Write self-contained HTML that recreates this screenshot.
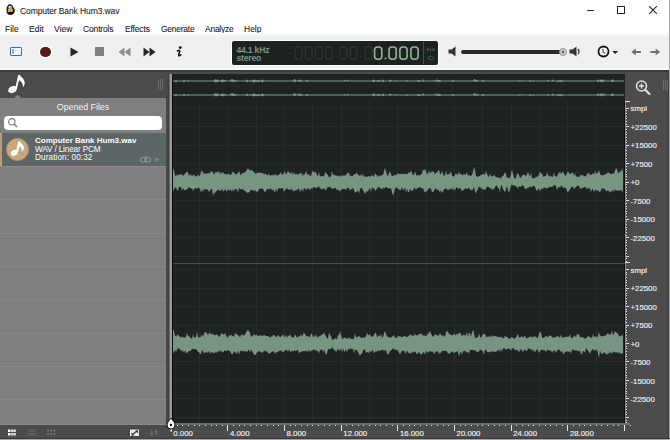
<!DOCTYPE html>
<html><head><meta charset="utf-8">
<style>
*{margin:0;padding:0;box-sizing:border-box}
html,body{width:670px;height:440px;overflow:hidden;background:#fff}
body{position:relative;font-family:"Liberation Sans",sans-serif;color:#000}
.a{position:absolute}
.t{white-space:nowrap;line-height:1}
</style></head><body>
<!-- title bar -->
<div class="a" style="left:0;top:0;width:670px;height:35px;background:#fff"></div>
<svg class="a" style="left:0;top:0" width="20" height="20">
  <path d="M9.5 4.2C11.5 4 13 5.5 13.2 7.2C14.5 8.5 15.2 10.5 14.6 12.2C13.8 14.2 11.5 15 9.5 14.8C7.5 14.6 6.4 13 6.6 11C6.2 9.5 6.5 7.5 7.3 6.2C7.8 5 8.5 4.3 9.5 4.2Z" fill="#1e1a14"/>
  <path d="M8.2 6.5C9 5.6 11 5.5 12 6.5L11.5 8H8.5Z" fill="#c8ccd2"/>
  <ellipse cx="10.3" cy="10.3" rx="2.6" ry="2.5" fill="#c9a55e"/>
  <ellipse cx="10.6" cy="13.3" rx="2.4" ry="1.2" fill="#0c0c0c"/>
</svg>
<div class="a t" style="left:20px;top:7px;font-size:8.5px;color:#1a1a1a;-webkit-text-stroke:0.08px #1a1a1a;letter-spacing:-0.1px">Computer Bank Hum3.wav</div>
<!-- window controls -->
<div class="a" style="left:587px;top:10px;width:7px;height:1px;background:#222"></div>
<div class="a" style="left:617px;top:6px;width:8px;height:8px;border:1px solid #222"></div>
<svg class="a" style="left:649px;top:6px" width="8" height="8" viewBox="0 0 8 8"><path d="M0 0L8 8M8 0L0 8" stroke="#222" stroke-width="1.1"/></svg>
<!-- menu -->
<div class="a t" style="left:5px;top:25px;font-size:8.5px;color:#1a1a1a;-webkit-text-stroke:0.08px #1a1a1a">File</div>
<div class="a t" style="left:29px;top:25px;font-size:8.5px;color:#1a1a1a;-webkit-text-stroke:0.08px #1a1a1a">Edit</div>
<div class="a t" style="left:54px;top:25px;font-size:8.5px;color:#1a1a1a;-webkit-text-stroke:0.08px #1a1a1a">View</div>
<div class="a t" style="left:83px;top:25px;font-size:8.5px;color:#1a1a1a;-webkit-text-stroke:0.08px #1a1a1a;letter-spacing:-0.15px">Controls</div>
<div class="a t" style="left:125px;top:25px;font-size:8.5px;color:#1a1a1a;-webkit-text-stroke:0.08px #1a1a1a;letter-spacing:-0.15px">Effects</div>
<div class="a t" style="left:161px;top:25px;font-size:8.5px;color:#1a1a1a;-webkit-text-stroke:0.08px #1a1a1a;letter-spacing:-0.25px">Generate</div>
<div class="a t" style="left:205px;top:25px;font-size:8.5px;color:#1a1a1a;-webkit-text-stroke:0.08px #1a1a1a;letter-spacing:-0.25px">Analyze</div>
<div class="a t" style="left:244px;top:25px;font-size:8.5px;color:#1a1a1a;-webkit-text-stroke:0.08px #1a1a1a">Help</div>
<!-- toolbar -->
<div class="a" style="left:0;top:33px;width:670px;height:36px;background:linear-gradient(180deg,#fff 0px,#f0f0f0 4px,#f0f0f0 100%)"></div>
<div class="a" style="left:0;top:68px;width:670px;height:2px;background:#fafafa"></div>
<!-- sidebar toggle -->
<div class="a" style="left:10px;top:47px;width:12px;height:9px;border:1.5px solid #3d6aa5;border-radius:1px;background:#f4f6fa"></div>
<div class="a" style="left:12px;top:49px;width:2px;height:5px;background:#9db3d3"></div>
<!-- record -->
<div class="a" style="left:40px;top:46.5px;width:10.5px;height:10.5px;border-radius:50%;background:radial-gradient(circle,#5c1d1d 0%,#541818 60%,#3a0c0c 100%);box-shadow:0 0 0 1.3px #fff"></div>
<!-- play -->
<svg class="a" style="left:70px;top:47px" width="9" height="10"><path d="M0.5 0.5L8.5 5L0.5 9.5Z" fill="#262626"/></svg>
<!-- stop -->
<div class="a" style="left:95px;top:47px;width:9px;height:9px;background:#808080"></div>
<!-- rewind -->
<svg class="a" style="left:118px;top:47px" width="13" height="10"><path d="M6.5 0.5L0.5 5L6.5 9.5ZM12.5 0.5L6.5 5L12.5 9.5Z" fill="#8c8c8c"/></svg>
<!-- ff -->
<svg class="a" style="left:143px;top:47px" width="13" height="10"><path d="M0.5 0.5L6.5 5L0.5 9.5ZM6.5 0.5L12.5 5L6.5 9.5Z" fill="#262626"/></svg>
<!-- info -->
<svg class="a" style="left:0;top:0" width="200" height="70"><g stroke="#fff" stroke-width="3" stroke-linecap="round" fill="none" opacity="0.9"><path d="M177.5 50.8Q179.4 49.9 179.7 51.2L178.7 54.9Q178.5 56.2 179.8 55.6L180.9 54.9"/></g><circle cx="180.3" cy="47.6" r="1.45" fill="#111"/><path d="M177.5 50.8Q179.4 49.9 179.7 51.2L178.7 54.9Q178.5 56.2 179.8 55.6L180.9 54.9" stroke="#111" stroke-width="1.7" stroke-linecap="round" stroke-linejoin="round" fill="none"/></svg>
<!-- time display -->
<div class="a" style="left:231px;top:40px;width:208px;height:26px;border-radius:3px;background:#fff"></div>
<div class="a" style="left:232px;top:41px;width:206px;height:24px;border-radius:2px;background:#1d211f"></div>
<div class="a t" style="left:236.5px;top:46px;font-size:8.6px;font-weight:bold;color:#7a9684;letter-spacing:-0.2px">44.1 kHz</div>
<div class="a t" style="left:236.5px;top:54px;font-size:8.6px;font-weight:bold;color:#7a9684;letter-spacing:-0.2px">stereo</div>
<svg class="a" style="left:0;top:0" width="670" height="70">
<g fill="none" stroke="#2b312d" stroke-width="1.6"><rect x="295.3" y="46.8" width="6.8" height="12.4" rx="2.8"/><rect x="305.4" y="46.8" width="6.8" height="12.4" rx="2.8"/><rect x="315.4" y="46.8" width="6.8" height="12.4" rx="2.8"/><rect x="325.5" y="46.8" width="6.8" height="12.4" rx="2.8"/><rect x="340.0" y="46.8" width="6.8" height="12.4" rx="2.8"/><rect x="350.2" y="46.8" width="6.8" height="12.4" rx="2.8"/><rect x="365.3" y="46.8" width="6.8" height="12.4" rx="2.8"/></g><path d="M287.5 53.3H291" stroke="#2b312d" stroke-width="1.4"/><g fill="#2b312d"><rect x="335.5" y="50" width="1.5" height="1.5"/><rect x="335.5" y="56" width="1.5" height="1.5"/><rect x="360" y="50" width="1.5" height="1.5"/><rect x="360" y="56" width="1.5" height="1.5"/></g><g fill="none" stroke="#93b89d" stroke-width="1.55"><rect x="374.6" y="46.9" width="7.2" height="12.3" rx="3"/><rect x="389.0" y="46.9" width="7.2" height="12.3" rx="3"/><rect x="399.9" y="46.9" width="7.2" height="12.3" rx="3"/><rect x="410.9" y="46.9" width="7.2" height="12.3" rx="3"/></g><rect x="384.6" y="57.6" width="1.7" height="1.7" fill="#93b89d"/></svg>
<div class="a" style="left:423px;top:42px;width:1px;height:22px;background:#3b5247"></div>
<svg class="a" style="left:0;top:0" width="440" height="70"><g fill="#3f5b4c"><path d="M427 47.8L430 49.6L427 51.4Z"/><rect x="430.3" y="47.6" width="0.9" height="4"/><path d="M434.5 47.8L431.5 49.6L434.5 51.4Z"/></g><ellipse cx="430.8" cy="58.2" rx="3" ry="1.6" fill="none" stroke="#3f5b4c" stroke-width="1"/><path d="M429.5 56.2L431 55.6" stroke="#3f5b4c" stroke-width="0.9"/></svg>
<!-- volume -->
<svg class="a" style="left:448px;top:46px" width="10" height="11"><path d="M0.5 3.5H3.5L7.5 0.5V10.5L3.5 7.5H0.5Z" fill="#333"/></svg>
<div class="a" style="left:461px;top:49.5px;width:103px;height:4px;border-radius:2px;background:#2b2b2b"></div>
<div class="a" style="left:559px;top:47.5px;width:8px;height:8px;border-radius:50%;background:#c8c8c8;border:1px solid #9a9a9a"></div>
<div class="a" style="left:562px;top:50.5px;width:2px;height:2px;border-radius:50%;background:#333"></div>
<svg class="a" style="left:569px;top:46px" width="12" height="11"><path d="M0.5 3.5H3.5L7.5 0.5V10.5L3.5 7.5H0.5Z" fill="#333"/><path d="M9 3Q11 5.5 9 8" stroke="#333" stroke-width="1.3" fill="none"/></svg>
<!-- clock -->
<svg class="a" style="left:596.5px;top:45px" width="24" height="13"><circle cx="6.5" cy="6.5" r="5" stroke="#111" stroke-width="1.8" fill="#fff"/><path d="M6 3.8V6.8L8.3 8.6" stroke="#555" stroke-width="1.2" fill="none"/><path d="M15.2 6H21.2L18.2 9Z" fill="#222"/></svg>
<!-- arrows -->
<svg class="a" style="left:0;top:0" width="670" height="70"><g fill="#707070" stroke="#fff" stroke-width="0.6" paint-order="stroke"><path d="M631.3 51.9L635.8 48.6V50.9H640.9V52.9H635.8V55.2Z"/><path d="M660.2 51.9L655.7 48.6V50.9H650.4V52.9H655.7V55.2Z"/></g></svg>

<!-- dark frame -->
<div class="a" style="left:0;top:70px;width:670px;height:370px;background:#4b4b4b"></div>
<div class="a" style="left:0;top:70px;width:670px;height:2px;background:#3c3c3c"></div>
<!-- left header icon -->
<svg class="a" style="left:0;top:0" width="30" height="100"><path d="M17.6 74.6 L19.8 74.3 C21.5 77 25.5 79.5 25.2 83.5 C25 85.5 23.8 87 22 88.2 C22.8 85.5 22.3 82.5 19.3 80.8 L17.3 89.5 C16.6 92 14 93.5 11.5 93.5 C9.2 93.5 7.8 92.2 7.8 90.5 C7.8 87.8 10.5 85.5 13.5 85.5 C14.3 85.5 14.9 85.6 15.3 85.9 Z" fill="#fff" stroke="#363636" stroke-width="0.9"/></svg>
<!-- grip -->
<div class="a" style="left:158px;top:79px;width:1px;height:11px;background:#6a6a6a"></div>
<div class="a" style="left:160px;top:79px;width:1px;height:11px;background:#6a6a6a"></div>
<div class="a" style="left:162px;top:79px;width:1px;height:11px;background:#6a6a6a"></div>
<!-- opened files panel -->
<div class="a" style="left:0;top:98px;width:166px;height:327px;background:#7f7f7f"></div>
<svg class="a" style="left:0;top:0" width="30" height="100"><path d="M13.4 98.2L17.6 94.8L21.8 98.2Z" fill="#7f7f7f"/></svg>
<div class="a t" style="left:0;top:103px;width:166px;text-align:center;font-size:8.8px;color:#f4f4f4">Opened Files</div>
<div class="a" style="left:4px;top:116px;width:158px;height:14px;border-radius:4px;background:#fff"></div>
<svg class="a" style="left:7px;top:117px" width="12" height="12"><circle cx="4.8" cy="4.8" r="3.2" stroke="#777" stroke-width="1.1" fill="none"/><path d="M7.2 7.2L10 10" stroke="#777" stroke-width="1.5"/></svg>
<!-- file item -->
<div class="a" style="left:0;top:133px;width:166px;height:33px;background:#5e6567"></div>
<div class="a" style="left:0;top:133px;width:2px;height:33px;background:#b89d76"></div>
<div class="a" style="left:6px;top:138px;width:23px;height:23px;border-radius:50%;background:#c8a97b;border:1px solid #b09470"></div>
<svg class="a" style="left:0;top:0" width="34" height="166"><path d="M17.6 74.6 L19.8 74.3 C21.5 77 25.5 79.5 25.2 83.5 C25 85.5 23.8 87 22 88.2 C22.8 85.5 22.3 82.5 19.3 80.8 L17.3 89.5 C16.6 92 14 93.5 11.5 93.5 C9.2 93.5 7.8 92.2 7.8 90.5 C7.8 87.8 10.5 85.5 13.5 85.5 C14.3 85.5 14.9 85.6 15.3 85.9 Z" fill="#fff" transform="translate(10.7 141.3) scale(0.76) translate(-7.8 -74.3)"/></svg>
<div class="a t" style="left:35px;top:137px;font-size:8px;font-weight:bold;color:#fff">Computer Bank Hum3.wav</div>
<div class="a t" style="left:35px;top:145.5px;font-size:8.2px;color:#fff;letter-spacing:-0.15px">WAV / Linear PCM</div>
<div class="a t" style="left:35px;top:154px;font-size:8.2px;color:#fff;letter-spacing:0.1px">Duration: 00:32</div>
<svg class="a" style="left:0;top:0" width="166" height="166"><g fill="none" stroke="#8f9698" stroke-width="1.1"><rect x="140.5" y="157.2" width="6" height="4.8" rx="2.4" transform="rotate(-15 143.5 159.6)"/><rect x="144.5" y="157.2" width="6" height="4.8" rx="2.4" transform="rotate(-15 147.5 159.6)"/></g><path d="M155.2 157.3L159.8 159.8L155.2 162.3Z" fill="#7d8486"/></svg>
<!-- row separators -->
<div class="a" style="left:0;top:166px;width:166px;height:1px;background:#8a8a8a"></div>
<div class="a" style="left:0;top:199px;width:166px;height:1px;background:#888"></div>
<div class="a" style="left:0;top:233px;width:166px;height:1px;background:#888"></div>
<div class="a" style="left:0;top:266px;width:166px;height:1px;background:#888"></div>
<div class="a" style="left:0;top:299px;width:166px;height:1px;background:#888"></div>
<div class="a" style="left:0;top:333px;width:166px;height:1px;background:#888"></div>
<div class="a" style="left:0;top:366px;width:166px;height:1px;background:#888"></div>
<div class="a" style="left:0;top:399px;width:166px;height:1px;background:#888"></div>
<div class="a" style="left:0;top:424px;width:166px;height:1px;background:#8a8a8a"></div>

<!-- bottom bar icons -->
<svg class="a" style="left:7px;top:429px" width="50" height="8">
 <rect x="1" y="0.5" width="2.5" height="2.5" fill="#fff"/><rect x="1" y="4" width="2.5" height="2.5" fill="#fff"/>
 <rect x="4" y="0.5" width="5" height="2.5" fill="#cfcfcf"/><rect x="4" y="4" width="5" height="2.5" fill="#cfcfcf"/>
 <rect x="21" y="0.5" width="8" height="2.5" fill="#5c5c5c"/><rect x="21" y="4" width="8" height="2.5" fill="#5c5c5c"/>
 <rect x="40" y="0.5" width="2" height="2" fill="#6c6c6c"/><rect x="43" y="0.5" width="2" height="2" fill="#6c6c6c"/><rect x="46" y="0.5" width="2" height="2" fill="#6c6c6c"/>
 <rect x="40" y="4" width="2" height="2" fill="#6c6c6c"/><rect x="43" y="4" width="2" height="2" fill="#6c6c6c"/><rect x="46" y="4" width="2" height="2" fill="#6c6c6c"/>
</svg>
<svg class="a" style="left:0;top:0" width="170" height="440">
 <rect x="129.5" y="429" width="10" height="7.5" rx="0.8" fill="#ececec" stroke="#2a2a2a" stroke-width="0.8"/>
 <path d="M132 435L137.5 430.5" stroke="#333" stroke-width="1.1"/><path d="M131.5 432.5V435.5H134.5Z M138 433.5V430.5H135Z" fill="#333"/>
 <path d="M151.8 430V434.5M150.2 433L151.8 435L153.4 433M156 435V430.5M154.4 432.5L156 430.5L157.6 432.5" stroke="#6e6e6e" stroke-width="1.2" fill="none"/>
</svg>

<!-- splitter light strip -->
<div class="a" style="left:166px;top:74px;width:3px;height:351px;background:linear-gradient(90deg,#4a4a4a,#3f3f3f)"></div>
<div class="a" style="left:169px;top:74px;width:1px;height:351px;background:#6a6a6a"></div>
<div class="a" style="left:170px;top:74px;width:2px;height:358px;background:#9a9b9b"></div>
<div class="a" style="left:172px;top:74px;width:1px;height:350px;background:#080808"></div>

<!-- waveform -->
<div class="a" style="left:173px;top:74px;width:452px;height:349px;background:#1e2221"></div>
<div class="a" style="left:624px;top:101px;width:1px;height:322px;background:#0a0a0a"></div>
<svg class="a" style="left:0;top:0" width="670" height="440">
 <g fill="#272c2a">
 <rect x="199" y="101" width="1" height="322"/>
<rect x="228" y="101" width="1" height="322"/>
<rect x="256" y="101" width="1" height="322"/>
<rect x="284" y="101" width="1" height="322"/>
<rect x="312" y="101" width="1" height="322"/>
<rect x="341" y="101" width="1" height="322"/>
<rect x="369" y="101" width="1" height="322"/>
<rect x="397" y="101" width="1" height="322"/>
<rect x="426" y="101" width="1" height="322"/>
<rect x="454" y="101" width="1" height="322"/>
<rect x="482" y="101" width="1" height="322"/>
<rect x="511" y="101" width="1" height="322"/>
<rect x="539" y="101" width="1" height="322"/>
<rect x="567" y="101" width="1" height="322"/>
<rect x="596" y="101" width="1" height="322"/>
<rect x="173" y="108" width="451" height="1"/>
<rect x="173" y="126" width="451" height="1"/>
<rect x="173" y="145" width="451" height="1"/>
<rect x="173" y="163" width="451" height="1"/>
<rect x="173" y="182" width="451" height="1"/>
<rect x="173" y="200" width="451" height="1"/>
<rect x="173" y="219" width="451" height="1"/>
<rect x="173" y="237" width="451" height="1"/>
<rect x="173" y="256" width="451" height="1"/>
<rect x="173" y="269" width="451" height="1"/>
<rect x="173" y="288" width="451" height="1"/>
<rect x="173" y="306" width="451" height="1"/>
<rect x="173" y="325" width="451" height="1"/>
<rect x="173" y="343" width="451" height="1"/>
<rect x="173" y="361" width="451" height="1"/>
<rect x="173" y="380" width="451" height="1"/>
<rect x="173" y="398" width="451" height="1"/>
<rect x="173" y="417" width="451" height="1"/>
 </g>
 <rect x="173" y="263" width="452" height="1" fill="#474c4a"/>
 <path d="M173,80.5 L174,80.5 L175,80.5 L176,80.0 L177,80.5 L178,80.5 L179,80.5 L180,80.5 L181,80.5 L182,80.5 L183,80.5 L184,79.4 L185,80.5 L186,80.5 L187,80.5 L188,80.1 L189,80.5 L190,80.5 L191,80.5 L192,80.5 L193,80.5 L194,80.5 L195,80.5 L196,80.5 L197,80.5 L198,80.5 L199,80.5 L200,80.5 L201,80.5 L202,80.5 L203,80.5 L204,80.5 L205,80.5 L206,80.5 L207,80.5 L208,80.5 L209,80.5 L210,80.5 L211,80.5 L212,80.5 L213,80.5 L214,80.5 L215,79.1 L216,79.7 L217,79.6 L218,79.4 L219,80.5 L220,80.5 L221,80.3 L222,79.5 L223,79.5 L224,80.5 L225,79.8 L226,80.5 L227,80.5 L228,80.5 L229,80.5 L230,80.5 L231,79.3 L232,79.5 L233,79.3 L234,79.9 L235,80.5 L236,79.7 L237,80.5 L238,80.5 L239,80.5 L240,80.5 L241,80.5 L242,80.5 L243,80.5 L244,80.5 L245,80.5 L246,80.5 L247,79.2 L248,80.5 L249,80.5 L250,79.9 L251,80.5 L252,80.5 L253,79.2 L254,80.3 L255,79.5 L256,80.5 L257,80.0 L258,80.5 L259,79.7 L260,80.5 L261,80.5 L262,79.5 L263,79.7 L264,80.5 L265,80.2 L266,80.5 L267,80.5 L268,80.5 L269,80.5 L270,80.5 L271,80.5 L272,80.5 L273,80.5 L274,80.5 L275,80.5 L276,80.5 L277,80.5 L278,80.5 L279,80.5 L280,80.5 L281,80.5 L282,80.5 L283,80.5 L284,80.5 L285,80.5 L286,80.5 L287,80.5 L288,80.5 L289,80.5 L290,80.5 L291,80.5 L292,80.5 L293,80.5 L294,79.2 L295,79.3 L296,80.5 L297,80.5 L298,79.4 L299,80.5 L300,79.6 L301,80.0 L302,80.5 L303,80.5 L304,80.5 L305,80.5 L306,80.5 L307,79.5 L308,80.5 L309,80.5 L310,80.5 L311,80.5 L312,80.5 L313,80.5 L314,80.5 L315,80.5 L316,80.5 L317,80.5 L318,80.5 L319,80.5 L320,80.5 L321,80.5 L322,80.5 L323,80.5 L324,80.5 L325,80.5 L326,80.5 L327,80.5 L328,80.5 L329,80.5 L330,80.5 L331,80.5 L332,80.5 L333,80.5 L334,80.5 L335,80.5 L336,80.5 L337,80.5 L338,80.5 L339,80.5 L340,80.5 L341,80.5 L342,80.5 L343,80.5 L344,80.5 L345,79.7 L346,80.5 L347,80.5 L348,79.5 L349,80.5 L350,80.5 L351,80.5 L352,80.5 L353,80.5 L354,80.5 L355,80.5 L356,80.5 L357,80.5 L358,80.5 L359,80.5 L360,80.5 L361,80.5 L362,80.5 L363,80.5 L364,80.5 L365,80.5 L366,80.5 L367,80.5 L368,80.5 L369,80.5 L370,80.5 L371,80.5 L372,80.5 L373,79.4 L374,79.7 L375,80.5 L376,80.2 L377,80.5 L378,79.8 L379,80.5 L380,79.8 L381,80.5 L382,80.5 L383,79.3 L384,80.5 L385,80.5 L386,80.5 L387,80.5 L388,80.5 L389,80.5 L390,79.7 L391,79.7 L392,80.5 L393,80.5 L394,80.5 L395,80.5 L396,79.9 L397,80.5 L398,80.5 L399,80.5 L400,80.5 L401,80.5 L402,80.5 L403,80.5 L404,80.5 L405,80.5 L406,80.5 L407,80.1 L408,80.5 L409,80.5 L410,80.5 L411,80.5 L412,80.5 L413,80.5 L414,80.5 L415,80.5 L416,80.5 L417,80.5 L418,80.1 L419,80.2 L420,80.3 L421,80.5 L422,80.5 L423,79.1 L424,80.5 L425,80.5 L426,80.5 L427,80.5 L428,80.5 L429,80.5 L430,80.5 L431,80.5 L432,80.5 L433,80.5 L434,80.5 L435,80.1 L436,80.5 L437,79.1 L438,80.5 L439,79.9 L440,79.9 L441,80.5 L442,80.5 L443,80.5 L444,80.5 L445,80.5 L446,80.5 L447,80.5 L448,80.5 L449,80.5 L450,80.5 L451,80.5 L452,80.5 L453,79.7 L454,80.5 L455,80.5 L456,80.5 L457,80.5 L458,80.5 L459,80.5 L460,80.5 L461,80.5 L462,80.5 L463,80.5 L464,80.5 L465,80.5 L466,80.5 L467,80.5 L468,80.5 L469,80.5 L470,80.5 L471,80.5 L472,80.5 L473,80.5 L474,79.2 L475,79.3 L476,80.5 L477,79.6 L478,80.5 L479,80.5 L480,80.5 L481,80.5 L482,80.5 L483,79.6 L484,80.5 L485,80.5 L486,80.5 L487,80.5 L488,80.5 L489,80.5 L490,80.5 L491,80.5 L492,80.5 L493,80.5 L494,80.5 L495,80.5 L496,80.5 L497,80.5 L498,80.5 L499,80.5 L500,80.5 L501,80.5 L502,80.5 L503,80.5 L504,80.5 L505,80.5 L506,80.5 L507,80.5 L508,80.5 L509,80.5 L510,80.5 L511,80.5 L512,80.5 L513,80.5 L514,80.5 L515,80.5 L516,80.5 L517,80.5 L518,80.5 L519,80.2 L520,80.5 L521,80.5 L522,80.1 L523,80.5 L524,80.5 L525,80.5 L526,80.5 L527,80.5 L528,80.5 L529,80.5 L530,80.1 L531,80.5 L532,80.5 L533,80.3 L534,80.5 L535,80.5 L536,80.5 L537,80.5 L538,80.5 L539,80.5 L540,80.5 L541,80.5 L542,80.5 L543,80.5 L544,80.5 L545,80.5 L546,80.5 L547,80.5 L548,79.7 L549,80.5 L550,80.5 L551,80.5 L552,80.5 L553,79.2 L554,80.5 L555,80.5 L556,80.5 L557,80.5 L558,80.0 L559,80.5 L560,79.7 L561,80.5 L562,80.0 L563,80.5 L564,80.5 L565,80.5 L566,80.5 L567,80.5 L568,80.5 L569,80.5 L570,80.5 L571,80.5 L572,80.5 L573,80.5 L574,80.5 L575,80.5 L576,80.5 L577,80.5 L578,80.5 L579,80.5 L580,80.5 L581,80.5 L582,80.5 L583,80.5 L584,80.5 L585,80.5 L586,80.5 L587,80.5 L588,80.5 L589,80.5 L590,80.5 L591,80.5 L592,80.5 L593,80.5 L594,80.5 L595,80.5 L596,80.5 L597,80.5 L598,79.1 L599,80.5 L600,79.8 L601,79.7 L602,79.6 L603,80.5 L604,79.1 L605,80.5 L606,80.5 L607,80.5 L608,80.5 L609,80.5 L610,80.5 L611,80.5 L612,79.8 L613,79.3 L614,80.5 L615,80.5 L616,80.5 L617,80.5 L618,80.5 L619,80.5 L620,80.5 L621,80.5 L622,80.5 L623,80.5 L624,80.5 L624,81.5 L623,81.5 L622,81.5 L621,81.5 L620,81.5 L619,81.5 L618,81.5 L617,81.5 L616,81.5 L615,81.5 L614,81.5 L613,81.9 L612,82.3 L611,81.5 L610,81.5 L609,81.5 L608,81.5 L607,81.5 L606,81.5 L605,81.5 L604,81.8 L603,81.5 L602,82.5 L601,81.9 L600,81.6 L599,81.5 L598,82.2 L597,81.5 L596,81.5 L595,81.5 L594,81.5 L593,81.5 L592,81.5 L591,81.5 L590,81.5 L589,81.5 L588,81.5 L587,81.5 L586,81.5 L585,81.5 L584,81.5 L583,81.5 L582,81.5 L581,81.5 L580,81.5 L579,81.5 L578,81.5 L577,81.5 L576,81.5 L575,81.5 L574,81.5 L573,81.5 L572,81.5 L571,81.5 L570,81.5 L569,81.5 L568,81.5 L567,81.5 L566,81.5 L565,81.5 L564,81.5 L563,81.5 L562,82.5 L561,81.5 L560,82.2 L559,81.5 L558,82.5 L557,81.5 L556,81.5 L555,81.5 L554,81.5 L553,81.7 L552,81.5 L551,81.5 L550,81.5 L549,81.5 L548,81.8 L547,81.5 L546,81.5 L545,81.5 L544,81.5 L543,81.5 L542,81.5 L541,81.5 L540,81.5 L539,81.5 L538,81.5 L537,81.5 L536,81.5 L535,81.5 L534,81.5 L533,82.1 L532,81.5 L531,81.5 L530,82.3 L529,81.5 L528,81.5 L527,81.5 L526,81.5 L525,81.5 L524,81.5 L523,81.5 L522,81.5 L521,81.5 L520,81.5 L519,81.7 L518,81.5 L517,81.5 L516,81.5 L515,81.5 L514,81.5 L513,81.5 L512,81.5 L511,81.5 L510,81.5 L509,81.5 L508,81.5 L507,81.5 L506,81.5 L505,81.5 L504,81.5 L503,81.5 L502,81.5 L501,81.5 L500,81.5 L499,81.5 L498,81.5 L497,81.5 L496,81.5 L495,81.5 L494,81.5 L493,81.5 L492,81.5 L491,81.5 L490,81.5 L489,81.5 L488,81.5 L487,81.5 L486,81.5 L485,81.5 L484,81.5 L483,82.2 L482,81.5 L481,81.5 L480,81.5 L479,81.5 L478,81.5 L477,81.9 L476,81.5 L475,82.1 L474,81.6 L473,81.5 L472,81.5 L471,81.5 L470,81.5 L469,81.5 L468,81.5 L467,81.5 L466,81.5 L465,81.5 L464,81.5 L463,81.5 L462,81.5 L461,81.5 L460,81.5 L459,81.5 L458,81.5 L457,81.5 L456,81.5 L455,81.5 L454,81.5 L453,82.3 L452,81.5 L451,81.5 L450,81.5 L449,81.5 L448,81.5 L447,81.5 L446,81.5 L445,81.5 L444,81.5 L443,81.5 L442,81.5 L441,81.5 L440,82.3 L439,82.1 L438,81.5 L437,82.0 L436,81.5 L435,81.5 L434,81.5 L433,81.5 L432,81.5 L431,81.5 L430,81.5 L429,81.5 L428,81.5 L427,81.5 L426,81.5 L425,81.5 L424,81.5 L423,81.7 L422,81.5 L421,81.5 L420,81.9 L419,81.7 L418,81.9 L417,81.5 L416,81.5 L415,81.5 L414,81.5 L413,81.5 L412,81.5 L411,81.5 L410,81.5 L409,81.5 L408,81.5 L407,82.0 L406,81.5 L405,81.5 L404,81.5 L403,81.5 L402,81.5 L401,81.5 L400,81.5 L399,81.5 L398,81.5 L397,81.5 L396,81.7 L395,81.5 L394,81.5 L393,81.5 L392,81.5 L391,81.5 L390,82.0 L389,81.5 L388,81.5 L387,81.5 L386,81.5 L385,81.5 L384,81.5 L383,82.4 L382,81.5 L381,81.5 L380,81.7 L379,81.5 L378,82.2 L377,81.5 L376,81.6 L375,81.5 L374,82.3 L373,81.9 L372,81.5 L371,81.5 L370,81.5 L369,81.5 L368,81.5 L367,81.5 L366,81.5 L365,81.5 L364,81.5 L363,81.5 L362,81.5 L361,81.5 L360,81.5 L359,81.5 L358,81.5 L357,81.5 L356,81.5 L355,81.5 L354,81.5 L353,81.5 L352,81.5 L351,81.5 L350,81.5 L349,81.5 L348,81.6 L347,81.5 L346,81.5 L345,81.7 L344,81.5 L343,81.5 L342,81.5 L341,81.5 L340,81.5 L339,81.5 L338,81.5 L337,81.5 L336,81.5 L335,81.5 L334,81.5 L333,81.5 L332,81.5 L331,81.5 L330,81.5 L329,81.5 L328,81.5 L327,81.5 L326,81.5 L325,81.5 L324,81.5 L323,81.5 L322,81.5 L321,81.5 L320,81.5 L319,81.5 L318,81.5 L317,81.5 L316,81.5 L315,81.5 L314,81.5 L313,81.5 L312,81.5 L311,81.5 L310,81.5 L309,81.5 L308,81.5 L307,82.3 L306,81.5 L305,81.5 L304,81.5 L303,81.5 L302,81.5 L301,82.1 L300,82.3 L299,81.5 L298,81.6 L297,81.5 L296,81.5 L295,82.2 L294,81.7 L293,81.5 L292,81.5 L291,81.5 L290,81.5 L289,81.5 L288,81.5 L287,81.5 L286,81.5 L285,81.5 L284,81.5 L283,81.5 L282,81.5 L281,81.5 L280,81.5 L279,81.5 L278,81.5 L277,81.5 L276,81.5 L275,81.5 L274,81.5 L273,81.5 L272,81.5 L271,81.5 L270,81.5 L269,81.5 L268,81.5 L267,81.5 L266,81.5 L265,81.6 L264,81.5 L263,81.9 L262,82.4 L261,81.5 L260,81.5 L259,82.3 L258,81.5 L257,82.4 L256,81.5 L255,82.0 L254,82.2 L253,82.4 L252,81.5 L251,81.5 L250,81.7 L249,81.5 L248,81.5 L247,82.4 L246,81.5 L245,81.5 L244,81.5 L243,81.5 L242,81.5 L241,81.5 L240,81.5 L239,81.5 L238,81.5 L237,81.5 L236,81.7 L235,81.5 L234,82.2 L233,81.9 L232,81.6 L231,81.7 L230,81.5 L229,81.5 L228,81.5 L227,81.5 L226,81.5 L225,82.1 L224,81.5 L223,82.2 L222,82.0 L221,82.1 L220,81.5 L219,81.5 L218,81.7 L217,82.4 L216,82.1 L215,82.4 L214,81.5 L213,81.5 L212,81.5 L211,81.5 L210,81.5 L209,81.5 L208,81.5 L207,81.5 L206,81.5 L205,81.5 L204,81.5 L203,81.5 L202,81.5 L201,81.5 L200,81.5 L199,81.5 L198,81.5 L197,81.5 L196,81.5 L195,81.5 L194,81.5 L193,81.5 L192,81.5 L191,81.5 L190,81.5 L189,81.5 L188,81.7 L187,81.5 L186,81.5 L185,81.5 L184,82.4 L183,81.5 L182,81.5 L181,81.5 L180,81.5 L179,81.5 L178,81.5 L177,81.5 L176,82.5 L175,81.5 L174,81.5 L173,81.5Z" fill="#7a9c89"/>
 <path d="M173,94.5 L174,94.5 L175,94.5 L176,94.0 L177,94.5 L178,94.5 L179,94.5 L180,94.5 L181,94.5 L182,94.5 L183,94.5 L184,93.4 L185,94.5 L186,94.5 L187,94.5 L188,94.1 L189,94.5 L190,94.5 L191,94.5 L192,94.5 L193,94.5 L194,94.5 L195,94.5 L196,94.5 L197,94.5 L198,94.5 L199,94.5 L200,94.5 L201,94.5 L202,94.5 L203,94.5 L204,94.5 L205,94.5 L206,94.5 L207,94.5 L208,94.5 L209,94.5 L210,94.5 L211,94.5 L212,94.5 L213,94.5 L214,94.5 L215,93.1 L216,93.7 L217,93.6 L218,93.4 L219,94.5 L220,94.5 L221,94.3 L222,93.5 L223,93.5 L224,94.5 L225,93.8 L226,94.5 L227,94.5 L228,94.5 L229,94.5 L230,94.5 L231,93.3 L232,93.5 L233,93.3 L234,93.9 L235,94.5 L236,93.7 L237,94.5 L238,94.5 L239,94.5 L240,94.5 L241,94.5 L242,94.5 L243,94.5 L244,94.5 L245,94.5 L246,94.5 L247,93.2 L248,94.5 L249,94.5 L250,93.9 L251,94.5 L252,94.5 L253,93.2 L254,94.3 L255,93.5 L256,94.5 L257,94.0 L258,94.5 L259,93.7 L260,94.5 L261,94.5 L262,93.5 L263,93.7 L264,94.5 L265,94.2 L266,94.5 L267,94.5 L268,94.5 L269,94.5 L270,94.5 L271,94.5 L272,94.5 L273,94.5 L274,94.5 L275,94.5 L276,94.5 L277,94.5 L278,94.5 L279,94.5 L280,94.5 L281,94.5 L282,94.5 L283,94.5 L284,94.5 L285,94.5 L286,94.5 L287,94.5 L288,94.5 L289,94.5 L290,94.5 L291,94.5 L292,94.5 L293,94.5 L294,93.2 L295,93.3 L296,94.5 L297,94.5 L298,93.4 L299,94.5 L300,93.6 L301,94.0 L302,94.5 L303,94.5 L304,94.5 L305,94.5 L306,94.5 L307,93.5 L308,94.5 L309,94.5 L310,94.5 L311,94.5 L312,94.5 L313,94.5 L314,94.5 L315,94.5 L316,94.5 L317,94.5 L318,94.5 L319,94.5 L320,94.5 L321,94.5 L322,94.5 L323,94.5 L324,94.5 L325,94.5 L326,94.5 L327,94.5 L328,94.5 L329,94.5 L330,94.5 L331,94.5 L332,94.5 L333,94.5 L334,94.5 L335,94.5 L336,94.5 L337,94.5 L338,94.5 L339,94.5 L340,94.5 L341,94.5 L342,94.5 L343,94.5 L344,94.5 L345,93.7 L346,94.5 L347,94.5 L348,93.5 L349,94.5 L350,94.5 L351,94.5 L352,94.5 L353,94.5 L354,94.5 L355,94.5 L356,94.5 L357,94.5 L358,94.5 L359,94.5 L360,94.5 L361,94.5 L362,94.5 L363,94.5 L364,94.5 L365,94.5 L366,94.5 L367,94.5 L368,94.5 L369,94.5 L370,94.5 L371,94.5 L372,94.5 L373,93.4 L374,93.7 L375,94.5 L376,94.2 L377,94.5 L378,93.8 L379,94.5 L380,93.8 L381,94.5 L382,94.5 L383,93.3 L384,94.5 L385,94.5 L386,94.5 L387,94.5 L388,94.5 L389,94.5 L390,93.7 L391,93.7 L392,94.5 L393,94.5 L394,94.5 L395,94.5 L396,93.9 L397,94.5 L398,94.5 L399,94.5 L400,94.5 L401,94.5 L402,94.5 L403,94.5 L404,94.5 L405,94.5 L406,94.5 L407,94.1 L408,94.5 L409,94.5 L410,94.5 L411,94.5 L412,94.5 L413,94.5 L414,94.5 L415,94.5 L416,94.5 L417,94.5 L418,94.1 L419,94.2 L420,94.3 L421,94.5 L422,94.5 L423,93.1 L424,94.5 L425,94.5 L426,94.5 L427,94.5 L428,94.5 L429,94.5 L430,94.5 L431,94.5 L432,94.5 L433,94.5 L434,94.5 L435,94.1 L436,94.5 L437,93.1 L438,94.5 L439,93.9 L440,93.9 L441,94.5 L442,94.5 L443,94.5 L444,94.5 L445,94.5 L446,94.5 L447,94.5 L448,94.5 L449,94.5 L450,94.5 L451,94.5 L452,94.5 L453,93.7 L454,94.5 L455,94.5 L456,94.5 L457,94.5 L458,94.5 L459,94.5 L460,94.5 L461,94.5 L462,94.5 L463,94.5 L464,94.5 L465,94.5 L466,94.5 L467,94.5 L468,94.5 L469,94.5 L470,94.5 L471,94.5 L472,94.5 L473,94.5 L474,93.2 L475,93.3 L476,94.5 L477,93.6 L478,94.5 L479,94.5 L480,94.5 L481,94.5 L482,94.5 L483,93.6 L484,94.5 L485,94.5 L486,94.5 L487,94.5 L488,94.5 L489,94.5 L490,94.5 L491,94.5 L492,94.5 L493,94.5 L494,94.5 L495,94.5 L496,94.5 L497,94.5 L498,94.5 L499,94.5 L500,94.5 L501,94.5 L502,94.5 L503,94.5 L504,94.5 L505,94.5 L506,94.5 L507,94.5 L508,94.5 L509,94.5 L510,94.5 L511,94.5 L512,94.5 L513,94.5 L514,94.5 L515,94.5 L516,94.5 L517,94.5 L518,94.5 L519,94.2 L520,94.5 L521,94.5 L522,94.1 L523,94.5 L524,94.5 L525,94.5 L526,94.5 L527,94.5 L528,94.5 L529,94.5 L530,94.1 L531,94.5 L532,94.5 L533,94.3 L534,94.5 L535,94.5 L536,94.5 L537,94.5 L538,94.5 L539,94.5 L540,94.5 L541,94.5 L542,94.5 L543,94.5 L544,94.5 L545,94.5 L546,94.5 L547,94.5 L548,93.7 L549,94.5 L550,94.5 L551,94.5 L552,94.5 L553,93.2 L554,94.5 L555,94.5 L556,94.5 L557,94.5 L558,94.0 L559,94.5 L560,93.7 L561,94.5 L562,94.0 L563,94.5 L564,94.5 L565,94.5 L566,94.5 L567,94.5 L568,94.5 L569,94.5 L570,94.5 L571,94.5 L572,94.5 L573,94.5 L574,94.5 L575,94.5 L576,94.5 L577,94.5 L578,94.5 L579,94.5 L580,94.5 L581,94.5 L582,94.5 L583,94.5 L584,94.5 L585,94.5 L586,94.5 L587,94.5 L588,94.5 L589,94.5 L590,94.5 L591,94.5 L592,94.5 L593,94.5 L594,94.5 L595,94.5 L596,94.5 L597,94.5 L598,93.1 L599,94.5 L600,93.8 L601,93.7 L602,93.6 L603,94.5 L604,93.1 L605,94.5 L606,94.5 L607,94.5 L608,94.5 L609,94.5 L610,94.5 L611,94.5 L612,93.8 L613,93.3 L614,94.5 L615,94.5 L616,94.5 L617,94.5 L618,94.5 L619,94.5 L620,94.5 L621,94.5 L622,94.5 L623,94.5 L624,94.5 L624,95.5 L623,95.5 L622,95.5 L621,95.5 L620,95.5 L619,95.5 L618,95.5 L617,95.5 L616,95.5 L615,95.5 L614,95.5 L613,95.9 L612,96.3 L611,95.5 L610,95.5 L609,95.5 L608,95.5 L607,95.5 L606,95.5 L605,95.5 L604,95.8 L603,95.5 L602,96.5 L601,95.9 L600,95.6 L599,95.5 L598,96.2 L597,95.5 L596,95.5 L595,95.5 L594,95.5 L593,95.5 L592,95.5 L591,95.5 L590,95.5 L589,95.5 L588,95.5 L587,95.5 L586,95.5 L585,95.5 L584,95.5 L583,95.5 L582,95.5 L581,95.5 L580,95.5 L579,95.5 L578,95.5 L577,95.5 L576,95.5 L575,95.5 L574,95.5 L573,95.5 L572,95.5 L571,95.5 L570,95.5 L569,95.5 L568,95.5 L567,95.5 L566,95.5 L565,95.5 L564,95.5 L563,95.5 L562,96.5 L561,95.5 L560,96.2 L559,95.5 L558,96.5 L557,95.5 L556,95.5 L555,95.5 L554,95.5 L553,95.7 L552,95.5 L551,95.5 L550,95.5 L549,95.5 L548,95.8 L547,95.5 L546,95.5 L545,95.5 L544,95.5 L543,95.5 L542,95.5 L541,95.5 L540,95.5 L539,95.5 L538,95.5 L537,95.5 L536,95.5 L535,95.5 L534,95.5 L533,96.1 L532,95.5 L531,95.5 L530,96.3 L529,95.5 L528,95.5 L527,95.5 L526,95.5 L525,95.5 L524,95.5 L523,95.5 L522,95.5 L521,95.5 L520,95.5 L519,95.7 L518,95.5 L517,95.5 L516,95.5 L515,95.5 L514,95.5 L513,95.5 L512,95.5 L511,95.5 L510,95.5 L509,95.5 L508,95.5 L507,95.5 L506,95.5 L505,95.5 L504,95.5 L503,95.5 L502,95.5 L501,95.5 L500,95.5 L499,95.5 L498,95.5 L497,95.5 L496,95.5 L495,95.5 L494,95.5 L493,95.5 L492,95.5 L491,95.5 L490,95.5 L489,95.5 L488,95.5 L487,95.5 L486,95.5 L485,95.5 L484,95.5 L483,96.2 L482,95.5 L481,95.5 L480,95.5 L479,95.5 L478,95.5 L477,95.9 L476,95.5 L475,96.1 L474,95.6 L473,95.5 L472,95.5 L471,95.5 L470,95.5 L469,95.5 L468,95.5 L467,95.5 L466,95.5 L465,95.5 L464,95.5 L463,95.5 L462,95.5 L461,95.5 L460,95.5 L459,95.5 L458,95.5 L457,95.5 L456,95.5 L455,95.5 L454,95.5 L453,96.3 L452,95.5 L451,95.5 L450,95.5 L449,95.5 L448,95.5 L447,95.5 L446,95.5 L445,95.5 L444,95.5 L443,95.5 L442,95.5 L441,95.5 L440,96.3 L439,96.1 L438,95.5 L437,96.0 L436,95.5 L435,95.5 L434,95.5 L433,95.5 L432,95.5 L431,95.5 L430,95.5 L429,95.5 L428,95.5 L427,95.5 L426,95.5 L425,95.5 L424,95.5 L423,95.7 L422,95.5 L421,95.5 L420,95.9 L419,95.7 L418,95.9 L417,95.5 L416,95.5 L415,95.5 L414,95.5 L413,95.5 L412,95.5 L411,95.5 L410,95.5 L409,95.5 L408,95.5 L407,96.0 L406,95.5 L405,95.5 L404,95.5 L403,95.5 L402,95.5 L401,95.5 L400,95.5 L399,95.5 L398,95.5 L397,95.5 L396,95.7 L395,95.5 L394,95.5 L393,95.5 L392,95.5 L391,95.5 L390,96.0 L389,95.5 L388,95.5 L387,95.5 L386,95.5 L385,95.5 L384,95.5 L383,96.4 L382,95.5 L381,95.5 L380,95.7 L379,95.5 L378,96.2 L377,95.5 L376,95.6 L375,95.5 L374,96.3 L373,95.9 L372,95.5 L371,95.5 L370,95.5 L369,95.5 L368,95.5 L367,95.5 L366,95.5 L365,95.5 L364,95.5 L363,95.5 L362,95.5 L361,95.5 L360,95.5 L359,95.5 L358,95.5 L357,95.5 L356,95.5 L355,95.5 L354,95.5 L353,95.5 L352,95.5 L351,95.5 L350,95.5 L349,95.5 L348,95.6 L347,95.5 L346,95.5 L345,95.7 L344,95.5 L343,95.5 L342,95.5 L341,95.5 L340,95.5 L339,95.5 L338,95.5 L337,95.5 L336,95.5 L335,95.5 L334,95.5 L333,95.5 L332,95.5 L331,95.5 L330,95.5 L329,95.5 L328,95.5 L327,95.5 L326,95.5 L325,95.5 L324,95.5 L323,95.5 L322,95.5 L321,95.5 L320,95.5 L319,95.5 L318,95.5 L317,95.5 L316,95.5 L315,95.5 L314,95.5 L313,95.5 L312,95.5 L311,95.5 L310,95.5 L309,95.5 L308,95.5 L307,96.3 L306,95.5 L305,95.5 L304,95.5 L303,95.5 L302,95.5 L301,96.1 L300,96.3 L299,95.5 L298,95.6 L297,95.5 L296,95.5 L295,96.2 L294,95.7 L293,95.5 L292,95.5 L291,95.5 L290,95.5 L289,95.5 L288,95.5 L287,95.5 L286,95.5 L285,95.5 L284,95.5 L283,95.5 L282,95.5 L281,95.5 L280,95.5 L279,95.5 L278,95.5 L277,95.5 L276,95.5 L275,95.5 L274,95.5 L273,95.5 L272,95.5 L271,95.5 L270,95.5 L269,95.5 L268,95.5 L267,95.5 L266,95.5 L265,95.6 L264,95.5 L263,95.9 L262,96.4 L261,95.5 L260,95.5 L259,96.3 L258,95.5 L257,96.4 L256,95.5 L255,96.0 L254,96.2 L253,96.4 L252,95.5 L251,95.5 L250,95.7 L249,95.5 L248,95.5 L247,96.4 L246,95.5 L245,95.5 L244,95.5 L243,95.5 L242,95.5 L241,95.5 L240,95.5 L239,95.5 L238,95.5 L237,95.5 L236,95.7 L235,95.5 L234,96.2 L233,95.9 L232,95.6 L231,95.7 L230,95.5 L229,95.5 L228,95.5 L227,95.5 L226,95.5 L225,96.1 L224,95.5 L223,96.2 L222,96.0 L221,96.1 L220,95.5 L219,95.5 L218,95.7 L217,96.4 L216,96.1 L215,96.4 L214,95.5 L213,95.5 L212,95.5 L211,95.5 L210,95.5 L209,95.5 L208,95.5 L207,95.5 L206,95.5 L205,95.5 L204,95.5 L203,95.5 L202,95.5 L201,95.5 L200,95.5 L199,95.5 L198,95.5 L197,95.5 L196,95.5 L195,95.5 L194,95.5 L193,95.5 L192,95.5 L191,95.5 L190,95.5 L189,95.5 L188,95.7 L187,95.5 L186,95.5 L185,95.5 L184,96.4 L183,95.5 L182,95.5 L181,95.5 L180,95.5 L179,95.5 L178,95.5 L177,95.5 L176,96.5 L175,95.5 L174,95.5 L173,95.5Z" fill="#7a9c89"/>
 <path d="M173,167.7 L174,170.7 L175,174.9 L176,176.4 L177,174.1 L178,175.8 L179,174.7 L180,173.8 L181,175.0 L182,174.0 L183,175.9 L184,174.8 L185,173.8 L186,172.4 L187,172.0 L188,172.3 L189,176.0 L190,174.4 L191,174.6 L192,176.7 L193,174.8 L194,174.8 L195,176.3 L196,176.2 L197,176.6 L198,174.5 L199,175.9 L200,175.7 L201,171.8 L202,170.2 L203,172.4 L204,173.6 L205,173.8 L206,173.6 L207,172.9 L208,174.1 L209,172.3 L210,173.6 L211,170.8 L212,171.9 L213,171.4 L214,174.9 L215,172.8 L216,171.4 L217,172.5 L218,172.3 L219,170.8 L220,174.7 L221,171.7 L222,173.7 L223,171.4 L224,174.5 L225,173.4 L226,174.2 L227,174.4 L228,173.9 L229,173.7 L230,175.0 L231,174.9 L232,172.6 L233,171.7 L234,172.8 L235,173.6 L236,174.4 L237,174.3 L238,172.5 L239,171.2 L240,173.5 L241,175.6 L242,173.2 L243,172.8 L244,173.0 L245,172.2 L246,171.6 L247,169.5 L248,168.2 L249,169.4 L250,170.3 L251,170.7 L252,169.7 L253,171.2 L254,171.9 L255,173.4 L256,173.8 L257,173.1 L258,172.4 L259,172.5 L260,172.7 L261,172.9 L262,173.1 L263,173.3 L264,174.4 L265,173.4 L266,174.3 L267,175.1 L268,175.1 L269,173.2 L270,176.2 L271,174.7 L272,175.5 L273,174.4 L274,175.7 L275,173.8 L276,174.8 L277,175.8 L278,175.3 L279,174.2 L280,174.1 L281,171.8 L282,175.3 L283,174.6 L284,172.8 L285,171.2 L286,174.8 L287,173.2 L288,170.7 L289,172.8 L290,172.8 L291,173.9 L292,171.6 L293,175.3 L294,171.8 L295,174.7 L296,173.8 L297,173.9 L298,174.9 L299,173.6 L300,174.0 L301,172.4 L302,174.2 L303,176.0 L304,173.3 L305,175.1 L306,170.6 L307,174.6 L308,174.0 L309,174.9 L310,175.2 L311,176.5 L312,172.0 L313,170.7 L314,172.8 L315,171.7 L316,172.6 L317,175.0 L318,176.3 L319,171.5 L320,176.8 L321,176.3 L322,176.0 L323,175.9 L324,176.8 L325,172.7 L326,172.4 L327,174.6 L328,175.0 L329,177.4 L330,176.4 L331,176.7 L332,170.7 L333,175.4 L334,174.2 L335,175.5 L336,175.5 L337,175.5 L338,176.4 L339,175.2 L340,177.0 L341,174.9 L342,175.8 L343,176.0 L344,174.7 L345,175.9 L346,174.7 L347,173.6 L348,173.1 L349,172.6 L350,176.6 L351,175.2 L352,176.7 L353,175.7 L354,173.9 L355,174.4 L356,173.6 L357,172.5 L358,174.6 L359,175.5 L360,175.6 L361,174.6 L362,176.4 L363,173.1 L364,177.2 L365,176.5 L366,176.5 L367,177.1 L368,176.3 L369,175.9 L370,176.8 L371,176.2 L372,174.7 L373,176.2 L374,176.7 L375,172.5 L376,174.9 L377,175.0 L378,177.4 L379,174.8 L380,176.5 L381,176.1 L382,174.5 L383,175.4 L384,171.2 L385,167.7 L386,171.2 L387,174.4 L388,176.3 L389,173.0 L390,171.3 L391,174.2 L392,176.4 L393,176.0 L394,175.3 L395,174.5 L396,175.8 L397,173.1 L398,174.2 L399,173.5 L400,173.9 L401,174.5 L402,173.0 L403,174.3 L404,174.3 L405,173.6 L406,174.0 L407,174.4 L408,173.2 L409,171.7 L410,173.3 L411,170.5 L412,172.7 L413,175.4 L414,174.6 L415,171.2 L416,174.4 L417,176.0 L418,175.1 L419,174.9 L420,176.1 L421,173.7 L422,174.2 L423,169.3 L424,171.1 L425,168.7 L426,171.7 L427,174.2 L428,173.8 L429,170.4 L430,172.7 L431,172.9 L432,170.2 L433,172.2 L434,171.4 L435,174.8 L436,172.0 L437,173.0 L438,170.4 L439,169.8 L440,173.9 L441,174.0 L442,170.3 L443,174.0 L444,176.0 L445,175.3 L446,170.3 L447,175.2 L448,174.1 L449,173.9 L450,173.5 L451,171.3 L452,175.7 L453,176.2 L454,176.7 L455,175.1 L456,173.1 L457,175.0 L458,174.1 L459,171.7 L460,174.3 L461,174.3 L462,174.5 L463,175.2 L464,173.3 L465,175.2 L466,174.2 L467,172.1 L468,175.7 L469,174.8 L470,176.1 L471,175.7 L472,174.8 L473,171.5 L474,166.9 L475,170.0 L476,176.1 L477,176.4 L478,176.9 L479,176.1 L480,175.9 L481,174.4 L482,174.8 L483,174.3 L484,173.3 L485,175.4 L486,170.3 L487,174.0 L488,176.3 L489,176.7 L490,173.5 L491,176.3 L492,176.4 L493,175.8 L494,175.3 L495,176.0 L496,177.5 L497,177.1 L498,177.6 L499,177.9 L500,177.6 L501,178.7 L502,175.7 L503,176.4 L504,174.0 L505,171.9 L506,174.2 L507,178.4 L508,177.1 L509,177.9 L510,178.5 L511,173.4 L512,169.2 L513,173.9 L514,177.7 L515,178.9 L516,177.4 L517,174.6 L518,172.9 L519,175.2 L520,177.7 L521,177.5 L522,175.4 L523,175.2 L524,174.5 L525,175.2 L526,176.7 L527,173.8 L528,172.1 L529,174.4 L530,176.3 L531,172.9 L532,178.3 L533,178.2 L534,178.2 L535,178.2 L536,176.3 L537,177.6 L538,176.3 L539,174.4 L540,171.2 L541,173.5 L542,173.2 L543,176.4 L544,176.7 L545,175.7 L546,176.0 L547,171.8 L548,175.7 L549,175.3 L550,176.9 L551,176.1 L552,176.6 L553,177.0 L554,171.8 L555,176.7 L556,176.0 L557,177.3 L558,173.6 L559,173.6 L560,171.2 L561,173.9 L562,172.7 L563,171.4 L564,173.6 L565,176.0 L566,175.1 L567,172.9 L568,171.2 L569,173.1 L570,174.5 L571,172.5 L572,173.5 L573,172.3 L574,175.9 L575,172.6 L576,177.4 L577,176.1 L578,177.0 L579,177.0 L580,175.6 L581,174.3 L582,175.9 L583,175.1 L584,175.9 L585,176.2 L586,176.8 L587,172.8 L588,174.8 L589,172.2 L590,174.7 L591,175.0 L592,174.2 L593,172.9 L594,174.9 L595,170.2 L596,173.9 L597,172.7 L598,172.8 L599,169.9 L600,173.4 L601,175.6 L602,175.0 L603,175.4 L604,174.9 L605,174.2 L606,174.3 L607,173.0 L608,172.8 L609,172.6 L610,173.8 L611,173.7 L612,174.3 L613,173.3 L614,173.7 L615,170.7 L616,167.7 L617,169.7 L618,172.5 L619,173.3 L620,170.6 L621,172.0 L622,168.0 L623,171.9 L623,192.8 L622,190.8 L621,190.0 L620,190.3 L619,190.9 L618,190.3 L617,190.9 L616,189.9 L615,189.4 L614,192.0 L613,189.5 L612,191.9 L611,190.7 L610,192.8 L609,191.6 L608,189.9 L607,191.0 L606,190.9 L605,189.4 L604,188.5 L603,188.5 L602,188.5 L601,189.9 L600,192.2 L599,191.4 L598,190.1 L597,191.1 L596,189.5 L595,190.2 L594,192.1 L593,189.3 L592,189.3 L591,192.2 L590,187.9 L589,189.1 L588,187.2 L587,189.6 L586,188.3 L585,186.6 L584,187.5 L583,187.7 L582,188.3 L581,188.8 L580,188.3 L579,186.6 L578,185.3 L577,186.2 L576,186.9 L575,188.2 L574,189.1 L573,187.2 L572,186.5 L571,187.3 L570,189.4 L569,190.3 L568,192.7 L567,191.3 L566,187.7 L565,188.5 L564,186.7 L563,188.3 L562,186.2 L561,185.4 L560,188.2 L559,186.4 L558,187.5 L557,190.2 L556,185.9 L555,184.7 L554,185.2 L553,186.1 L552,187.0 L551,187.3 L550,186.6 L549,187.2 L548,188.4 L547,187.4 L546,189.0 L545,187.7 L544,186.9 L543,189.5 L542,188.0 L541,189.5 L540,191.2 L539,188.6 L538,189.2 L537,191.3 L536,189.8 L535,186.6 L534,186.6 L533,185.3 L532,187.2 L531,187.2 L530,186.1 L529,188.1 L528,187.5 L527,188.7 L526,188.6 L525,189.3 L524,186.7 L523,185.2 L522,185.4 L521,186.8 L520,186.9 L519,185.7 L518,188.9 L517,187.1 L516,186.3 L515,185.8 L514,185.3 L513,185.4 L512,184.6 L511,185.4 L510,189.8 L509,193.0 L508,190.2 L507,186.0 L506,189.0 L505,192.3 L504,190.8 L503,188.9 L502,185.8 L501,185.1 L500,192.4 L499,188.1 L498,188.4 L497,185.5 L496,185.7 L495,187.1 L494,189.7 L493,188.6 L492,190.5 L491,187.2 L490,189.1 L489,187.1 L488,187.1 L487,186.4 L486,188.7 L485,189.4 L484,189.9 L483,188.8 L482,189.5 L481,187.5 L480,187.7 L479,186.3 L478,189.6 L477,190.2 L476,193.7 L475,190.9 L474,186.9 L473,189.1 L472,190.8 L471,189.6 L470,189.9 L469,187.3 L468,188.8 L467,189.2 L466,188.1 L465,188.8 L464,189.2 L463,190.4 L462,191.6 L461,188.9 L460,188.3 L459,187.8 L458,189.7 L457,187.1 L456,187.7 L455,190.7 L454,188.2 L453,190.9 L452,187.2 L451,190.2 L450,188.5 L449,189.3 L448,190.6 L447,189.3 L446,188.6 L445,188.9 L444,188.9 L443,191.9 L442,192.8 L441,190.0 L440,192.7 L439,190.7 L438,189.5 L437,190.0 L436,188.8 L435,188.6 L434,191.1 L433,192.0 L432,192.2 L431,188.5 L430,188.2 L429,188.4 L428,189.3 L427,191.7 L426,190.9 L425,192.7 L424,190.9 L423,188.0 L422,189.1 L421,187.6 L420,187.4 L419,187.1 L418,188.6 L417,187.7 L416,190.4 L415,187.7 L414,188.3 L413,190.6 L412,190.6 L411,191.0 L410,188.2 L409,192.2 L408,192.1 L407,188.5 L406,192.6 L405,187.5 L404,189.6 L403,190.2 L402,186.9 L401,189.8 L400,190.4 L399,189.2 L398,189.0 L397,187.5 L396,187.4 L395,188.4 L394,192.4 L393,195.7 L392,192.1 L391,188.0 L390,188.4 L389,188.6 L388,188.0 L387,187.8 L386,186.9 L385,187.5 L384,189.1 L383,187.3 L382,190.0 L381,187.9 L380,188.4 L379,186.7 L378,186.7 L377,189.4 L376,189.3 L375,191.6 L374,187.5 L373,189.3 L372,186.5 L371,192.5 L370,187.9 L369,189.0 L368,191.8 L367,190.8 L366,192.3 L365,194.2 L364,191.8 L363,190.5 L362,188.1 L361,187.8 L360,189.2 L359,194.0 L358,190.1 L357,191.7 L356,191.8 L355,193.1 L354,190.0 L353,187.4 L352,189.5 L351,188.8 L350,190.9 L349,188.3 L348,188.0 L347,187.7 L346,190.3 L345,189.3 L344,188.4 L343,189.4 L342,188.7 L341,189.7 L340,191.7 L339,190.2 L338,189.7 L337,190.2 L336,188.8 L335,187.5 L334,188.2 L333,189.2 L332,188.2 L331,188.0 L330,186.6 L329,187.4 L328,186.5 L327,188.2 L326,190.4 L325,189.6 L324,188.0 L323,188.9 L322,189.6 L321,188.5 L320,188.7 L319,186.6 L318,186.3 L317,188.4 L316,187.5 L315,187.5 L314,187.4 L313,187.0 L312,189.5 L311,187.5 L310,190.8 L309,188.7 L308,188.1 L307,189.8 L306,189.5 L305,188.7 L304,188.0 L303,192.0 L302,188.4 L301,190.7 L300,191.7 L299,188.2 L298,189.2 L297,189.8 L296,190.3 L295,190.6 L294,190.8 L293,191.6 L292,188.5 L291,189.6 L290,190.0 L289,189.2 L288,190.0 L287,187.7 L286,189.6 L285,189.4 L284,192.6 L283,188.2 L282,188.0 L281,188.4 L280,188.5 L279,188.0 L278,188.9 L277,192.2 L276,188.4 L275,192.1 L274,191.3 L273,189.6 L272,189.9 L271,188.7 L270,188.6 L269,189.6 L268,189.3 L267,188.7 L266,190.8 L265,192.3 L264,191.1 L263,188.5 L262,189.0 L261,188.5 L260,188.8 L259,188.9 L258,192.2 L257,191.1 L256,192.0 L255,189.4 L254,191.4 L253,189.9 L252,190.2 L251,189.5 L250,191.1 L249,192.7 L248,192.2 L247,193.2 L246,191.7 L245,190.8 L244,190.4 L243,188.9 L242,189.6 L241,189.4 L240,188.5 L239,188.0 L238,192.7 L237,189.2 L236,189.6 L235,188.8 L234,191.3 L233,188.9 L232,191.8 L231,190.1 L230,189.4 L229,191.0 L228,188.8 L227,191.8 L226,190.5 L225,189.1 L224,190.9 L223,191.6 L222,188.4 L221,190.6 L220,191.2 L219,189.6 L218,190.1 L217,190.7 L216,191.0 L215,193.0 L214,192.7 L213,195.9 L212,188.9 L211,188.5 L210,191.4 L209,191.6 L208,190.2 L207,189.0 L206,189.7 L205,188.8 L204,189.4 L203,191.7 L202,189.2 L201,193.1 L200,189.1 L199,188.1 L198,187.2 L197,189.5 L196,187.8 L195,188.3 L194,189.2 L193,191.2 L192,188.0 L191,189.0 L190,187.7 L189,187.2 L188,188.1 L187,189.6 L186,189.6 L185,190.5 L184,189.8 L183,188.0 L182,190.5 L181,187.2 L180,187.0 L179,186.8 L178,190.9 L177,190.0 L176,187.3 L175,188.0 L174,189.0 L173,191.7Z" fill="#789584"/>
 <path d="M173,328.6 L174,331.6 L175,335.7 L176,336.5 L177,335.2 L178,334.2 L179,336.3 L180,336.6 L181,337.8 L182,336.8 L183,336.8 L184,338.3 L185,337.1 L186,336.8 L187,332.7 L188,336.1 L189,335.9 L190,337.5 L191,337.7 L192,339.3 L193,334.0 L194,338.2 L195,336.6 L196,338.0 L197,330.8 L198,336.8 L199,337.6 L200,337.4 L201,336.4 L202,334.2 L203,337.0 L204,334.1 L205,331.9 L206,332.5 L207,333.1 L208,335.5 L209,333.1 L210,332.2 L211,335.1 L212,333.3 L213,334.3 L214,335.3 L215,334.5 L216,335.4 L217,333.7 L218,335.6 L219,336.7 L220,336.6 L221,333.6 L222,333.2 L223,334.3 L224,335.2 L225,332.4 L226,334.9 L227,337.2 L228,337.8 L229,334.9 L230,335.9 L231,334.3 L232,336.1 L233,335.9 L234,336.9 L235,333.1 L236,334.2 L237,334.2 L238,335.2 L239,336.0 L240,337.4 L241,335.1 L242,334.6 L243,335.8 L244,335.1 L245,335.1 L246,332.4 L247,331.2 L248,329.6 L249,331.8 L250,332.6 L251,337.1 L252,336.2 L253,335.6 L254,333.9 L255,335.5 L256,334.8 L257,334.7 L258,336.4 L259,335.5 L260,335.8 L261,335.1 L262,336.3 L263,335.8 L264,334.9 L265,335.2 L266,336.1 L267,336.3 L268,335.8 L269,336.9 L270,337.6 L271,335.9 L272,337.0 L273,334.9 L274,334.7 L275,336.1 L276,336.9 L277,336.6 L278,334.8 L279,336.6 L280,336.7 L281,336.8 L282,335.4 L283,334.5 L284,336.1 L285,337.6 L286,334.4 L287,337.4 L288,336.2 L289,335.8 L290,334.4 L291,336.0 L292,337.3 L293,337.6 L294,337.6 L295,334.0 L296,336.1 L297,337.5 L298,336.9 L299,335.7 L300,336.5 L301,334.1 L302,336.8 L303,334.5 L304,332.5 L305,333.7 L306,335.7 L307,336.4 L308,335.4 L309,337.2 L310,337.1 L311,333.4 L312,334.1 L313,337.8 L314,334.6 L315,337.5 L316,334.1 L317,336.9 L318,337.8 L319,335.8 L320,336.6 L321,335.2 L322,334.4 L323,334.4 L324,332.5 L325,334.4 L326,336.5 L327,338.3 L328,338.7 L329,332.2 L330,335.3 L331,335.8 L332,340.0 L333,339.7 L334,338.4 L335,339.3 L336,337.4 L337,340.3 L338,334.0 L339,335.9 L340,331.1 L341,334.6 L342,338.8 L343,339.0 L344,337.4 L345,337.7 L346,337.9 L347,338.6 L348,339.0 L349,337.3 L350,338.3 L351,338.9 L352,338.5 L353,339.6 L354,338.5 L355,332.4 L356,338.1 L357,336.8 L358,336.7 L359,336.3 L360,336.6 L361,337.7 L362,338.3 L363,337.0 L364,338.1 L365,337.1 L366,336.7 L367,332.5 L368,335.3 L369,335.1 L370,333.8 L371,336.7 L372,336.6 L373,336.5 L374,335.2 L375,333.0 L376,332.8 L377,337.7 L378,335.2 L379,336.1 L380,336.6 L381,333.6 L382,337.8 L383,337.0 L384,333.3 L385,331.1 L386,334.1 L387,336.3 L388,336.9 L389,337.6 L390,337.0 L391,337.9 L392,336.6 L393,336.1 L394,334.8 L395,338.2 L396,337.0 L397,338.2 L398,335.9 L399,336.2 L400,336.2 L401,336.8 L402,337.6 L403,336.4 L404,336.4 L405,335.2 L406,337.2 L407,336.8 L408,336.7 L409,335.7 L410,334.7 L411,334.5 L412,335.8 L413,335.4 L414,335.8 L415,332.9 L416,335.9 L417,334.8 L418,335.2 L419,334.3 L420,333.8 L421,333.6 L422,334.1 L423,336.0 L424,335.1 L425,336.0 L426,336.0 L427,335.3 L428,333.4 L429,332.7 L430,331.1 L431,333.6 L432,335.6 L433,337.0 L434,336.0 L435,333.6 L436,335.6 L437,334.6 L438,336.4 L439,335.0 L440,333.1 L441,334.7 L442,336.3 L443,334.7 L444,336.5 L445,336.5 L446,332.2 L447,331.1 L448,331.8 L449,333.8 L450,334.2 L451,335.2 L452,335.2 L453,335.3 L454,333.3 L455,335.3 L456,334.5 L457,333.9 L458,334.6 L459,332.7 L460,332.9 L461,333.7 L462,336.4 L463,335.0 L464,334.6 L465,335.5 L466,335.5 L467,331.5 L468,337.3 L469,333.1 L470,333.1 L471,336.4 L472,332.8 L473,329.6 L474,333.3 L475,338.1 L476,337.9 L477,336.9 L478,337.6 L479,333.3 L480,336.4 L481,338.0 L482,336.0 L483,333.7 L484,334.2 L485,333.7 L486,337.3 L487,337.0 L488,336.3 L489,337.1 L490,335.8 L491,337.8 L492,334.8 L493,337.0 L494,335.6 L495,336.3 L496,335.7 L497,337.0 L498,337.2 L499,336.4 L500,337.8 L501,336.2 L502,338.2 L503,337.8 L504,338.4 L505,335.3 L506,336.7 L507,336.7 L508,337.8 L509,338.9 L510,338.4 L511,337.6 L512,337.1 L513,337.8 L514,339.3 L515,338.0 L516,337.4 L517,335.6 L518,333.7 L519,337.6 L520,337.7 L521,336.4 L522,336.5 L523,338.1 L524,336.3 L525,336.0 L526,338.1 L527,338.4 L528,337.6 L529,337.5 L530,337.1 L531,336.0 L532,337.7 L533,336.8 L534,336.4 L535,336.8 L536,336.2 L537,338.6 L538,337.6 L539,333.9 L540,332.1 L541,332.3 L542,337.4 L543,338.0 L544,338.0 L545,336.8 L546,336.0 L547,336.4 L548,337.3 L549,335.8 L550,335.5 L551,335.8 L552,336.7 L553,337.7 L554,337.4 L555,337.2 L556,337.0 L557,336.4 L558,335.3 L559,337.8 L560,336.9 L561,334.2 L562,337.8 L563,337.6 L564,337.2 L565,336.7 L566,337.1 L567,336.8 L568,336.5 L569,336.8 L570,333.7 L571,337.9 L572,338.5 L573,337.0 L574,336.5 L575,335.3 L576,337.7 L577,333.8 L578,334.6 L579,334.6 L580,337.1 L581,337.7 L582,337.1 L583,337.2 L584,338.3 L585,338.8 L586,338.0 L587,337.4 L588,335.7 L589,336.6 L590,337.8 L591,337.3 L592,338.4 L593,333.4 L594,337.4 L595,336.2 L596,336.5 L597,337.9 L598,335.3 L599,332.3 L600,336.2 L601,335.6 L602,336.5 L603,336.2 L604,335.7 L605,335.4 L606,335.5 L607,333.9 L608,333.0 L609,334.3 L610,335.0 L611,333.8 L612,330.0 L613,335.4 L614,333.4 L615,331.1 L616,332.5 L617,332.7 L618,333.7 L619,336.0 L620,336.6 L621,335.8 L622,334.7 L623,336.3 L623,353.9 L622,352.9 L621,354.1 L620,353.6 L619,351.7 L618,353.4 L617,352.0 L616,352.4 L615,352.2 L614,352.4 L613,350.9 L612,354.5 L611,351.9 L610,352.6 L609,353.4 L608,353.3 L607,354.6 L606,354.5 L605,352.4 L604,352.4 L603,353.0 L602,354.5 L601,353.3 L600,350.4 L599,358.1 L598,353.3 L597,349.3 L596,350.5 L595,349.5 L594,351.6 L593,348.7 L592,349.6 L591,351.8 L590,354.1 L589,351.5 L588,350.9 L587,349.2 L586,348.0 L585,352.8 L584,351.6 L583,350.8 L582,353.7 L581,354.8 L580,350.6 L579,351.8 L578,350.4 L577,351.2 L576,349.8 L575,351.2 L574,349.2 L573,350.3 L572,348.9 L571,354.6 L570,351.0 L569,352.0 L568,351.6 L567,351.4 L566,351.4 L565,352.1 L564,353.9 L563,353.5 L562,350.9 L561,351.9 L560,350.4 L559,349.0 L558,350.2 L557,350.3 L556,352.9 L555,351.1 L554,349.7 L553,351.5 L552,352.9 L551,350.6 L550,350.8 L549,350.2 L548,350.1 L547,349.8 L546,352.4 L545,349.8 L544,350.8 L543,349.4 L542,350.1 L541,350.1 L540,351.2 L539,353.0 L538,351.1 L537,348.5 L536,351.3 L535,352.1 L534,349.8 L533,351.4 L532,349.3 L531,349.6 L530,349.2 L529,348.6 L528,348.3 L527,351.5 L526,349.9 L525,350.4 L524,349.3 L523,352.4 L522,350.4 L521,349.4 L520,349.5 L519,352.4 L518,350.6 L517,349.8 L516,350.1 L515,350.0 L514,349.1 L513,347.9 L512,348.3 L511,351.3 L510,348.8 L509,348.8 L508,348.7 L507,349.1 L506,349.9 L505,348.7 L504,347.9 L503,348.6 L502,352.0 L501,348.5 L500,352.3 L499,349.8 L498,350.0 L497,351.6 L496,351.3 L495,352.1 L494,352.1 L493,351.0 L492,352.0 L491,351.1 L490,352.2 L489,351.9 L488,352.4 L487,351.6 L486,349.7 L485,349.4 L484,354.8 L483,352.1 L482,349.8 L481,350.5 L480,349.3 L479,351.5 L478,352.3 L477,351.4 L476,351.8 L475,349.7 L474,350.4 L473,349.7 L472,350.3 L471,349.8 L470,350.3 L469,354.1 L468,351.7 L467,351.7 L466,352.9 L465,350.3 L464,351.3 L463,351.1 L462,355.0 L461,351.9 L460,352.6 L459,357.1 L458,351.9 L457,351.1 L456,352.2 L455,351.7 L454,353.8 L453,351.5 L452,351.8 L451,351.6 L450,354.2 L449,352.8 L448,354.0 L447,351.3 L446,351.0 L445,350.4 L444,350.9 L443,350.7 L442,350.7 L441,353.6 L440,352.0 L439,354.5 L438,351.0 L437,352.1 L436,350.8 L435,352.5 L434,354.3 L433,351.5 L432,351.7 L431,351.3 L430,351.5 L429,351.3 L428,353.0 L427,351.7 L426,350.9 L425,354.7 L424,352.0 L423,352.7 L422,354.0 L421,354.8 L420,353.8 L419,352.1 L418,353.1 L417,354.4 L416,352.8 L415,351.4 L414,351.4 L413,352.4 L412,352.4 L411,352.5 L410,353.9 L409,352.5 L408,352.6 L407,350.6 L406,353.5 L405,352.5 L404,350.5 L403,350.7 L402,351.1 L401,352.5 L400,354.7 L399,352.8 L398,350.4 L397,349.5 L396,349.9 L395,349.7 L394,349.1 L393,348.2 L392,349.4 L391,350.6 L390,351.2 L389,353.1 L388,354.8 L387,353.9 L386,349.5 L385,350.4 L384,351.0 L383,350.1 L382,349.4 L381,351.2 L380,349.8 L379,351.5 L378,349.9 L377,351.6 L376,351.8 L375,351.6 L374,353.7 L373,350.0 L372,350.5 L371,352.6 L370,350.6 L369,353.4 L368,352.0 L367,352.3 L366,352.7 L365,349.4 L364,349.2 L363,351.0 L362,353.5 L361,353.9 L360,356.1 L359,354.1 L358,352.2 L357,350.0 L356,350.0 L355,349.2 L354,353.4 L353,348.3 L352,349.8 L351,348.1 L350,349.0 L349,349.6 L348,348.8 L347,352.4 L346,349.2 L345,351.3 L344,351.8 L343,348.1 L342,351.9 L341,348.8 L340,349.7 L339,350.7 L338,348.6 L337,350.9 L336,351.7 L335,350.4 L334,349.6 L333,348.5 L332,347.1 L331,349.2 L330,349.1 L329,349.3 L328,349.3 L327,352.9 L326,354.7 L325,352.6 L324,349.4 L323,352.6 L322,348.8 L321,350.2 L320,349.5 L319,354.0 L318,350.9 L317,351.2 L316,349.4 L315,350.7 L314,348.8 L313,350.4 L312,350.0 L311,351.3 L310,351.7 L309,349.5 L308,352.8 L307,350.4 L306,351.0 L305,350.9 L304,351.6 L303,350.8 L302,352.1 L301,351.5 L300,352.4 L299,353.3 L298,350.1 L297,349.7 L296,351.5 L295,350.1 L294,351.3 L293,351.3 L292,350.4 L291,352.4 L290,350.9 L289,349.3 L288,352.3 L287,349.6 L286,350.5 L285,349.7 L284,351.7 L283,351.7 L282,351.7 L281,349.7 L280,351.4 L279,350.3 L278,351.9 L277,352.0 L276,352.4 L275,353.8 L274,351.4 L273,351.5 L272,351.5 L271,352.2 L270,353.5 L269,353.6 L268,353.1 L267,351.0 L266,351.9 L265,350.2 L264,351.5 L263,351.4 L262,353.1 L261,352.2 L260,351.6 L259,350.5 L258,352.3 L257,352.3 L256,354.3 L255,355.1 L254,354.4 L253,352.7 L252,351.1 L251,349.8 L250,352.6 L249,349.4 L248,350.5 L247,352.3 L246,351.2 L245,351.1 L244,351.2 L243,351.7 L242,350.1 L241,351.5 L240,350.7 L239,355.1 L238,350.5 L237,353.3 L236,353.5 L235,351.6 L234,351.4 L233,353.5 L232,354.5 L231,353.2 L230,350.9 L229,350.8 L228,350.1 L227,350.7 L226,351.5 L225,350.0 L224,351.2 L223,352.4 L222,352.0 L221,349.9 L220,352.0 L219,350.3 L218,352.4 L217,351.5 L216,353.8 L215,351.6 L214,353.2 L213,352.8 L212,352.3 L211,352.1 L210,354.1 L209,351.1 L208,352.2 L207,352.6 L206,352.6 L205,352.2 L204,353.4 L203,351.4 L202,350.1 L201,353.8 L200,354.5 L199,351.9 L198,352.1 L197,349.7 L196,349.5 L195,349.0 L194,349.2 L193,348.6 L192,349.1 L191,350.3 L190,351.2 L189,350.9 L188,351.8 L187,353.7 L186,352.0 L185,350.4 L184,353.6 L183,349.8 L182,351.9 L181,349.4 L180,350.4 L179,348.0 L178,348.3 L177,349.5 L176,352.2 L175,349.7 L174,352.1 L173,353.6Z" fill="#789584"/>
</svg>

<!-- right ruler -->
<div class="a" style="left:625px;top:74px;width:43px;height:351px;background:#4b4b4b"></div>
<svg class="a" style="left:633px;top:79px" width="20" height="18"><circle cx="8.5" cy="7" r="5" stroke="#ddd" stroke-width="1.6" fill="none"/><path d="M6 7H11M8.5 4.5V9.5" stroke="#ddd" stroke-width="1.4"/><path d="M12.2 10.7L16.5 15" stroke="#ddd" stroke-width="2.2" stroke-linecap="round"/></svg>
<div class="a" style="left:663px;top:80px;width:1px;height:10px;background:#6a6a6a"></div>
<div class="a" style="left:665px;top:80px;width:1px;height:10px;background:#6a6a6a"></div>
<div class="a" style="left:667px;top:80px;width:1px;height:10px;background:#6a6a6a"></div>

<svg class="a" style="left:0;top:0" width="670" height="440" id="rul">
<rect x="625" y="101" width="1" height="323" fill="#8e8e8e"/>
<g fill="#e0e0e0">
<rect x="625" y="101" width="5" height="1"/>
<rect x="626" y="108" width="3" height="1"/>
<rect x="626" y="110" width="1" height="1"/>
<rect x="626" y="113" width="1" height="1"/>
<rect x="626" y="116" width="1" height="1"/>
<rect x="626" y="118" width="1" height="1"/>
<rect x="626" y="121" width="1" height="1"/>
<rect x="626" y="124" width="1" height="1"/>
<rect x="626" y="126" width="3" height="1"/>
<rect x="626" y="129" width="1" height="1"/>
<rect x="626" y="132" width="1" height="1"/>
<rect x="626" y="134" width="1" height="1"/>
<rect x="626" y="137" width="1" height="1"/>
<rect x="626" y="140" width="1" height="1"/>
<rect x="626" y="142" width="1" height="1"/>
<rect x="626" y="145" width="3" height="1"/>
<rect x="626" y="147" width="1" height="1"/>
<rect x="626" y="150" width="1" height="1"/>
<rect x="626" y="153" width="1" height="1"/>
<rect x="626" y="155" width="1" height="1"/>
<rect x="626" y="158" width="1" height="1"/>
<rect x="626" y="161" width="1" height="1"/>
<rect x="626" y="163" width="3" height="1"/>
<rect x="626" y="166" width="1" height="1"/>
<rect x="626" y="169" width="1" height="1"/>
<rect x="626" y="171" width="1" height="1"/>
<rect x="626" y="174" width="1" height="1"/>
<rect x="626" y="176" width="1" height="1"/>
<rect x="626" y="179" width="1" height="1"/>
<rect x="626" y="182" width="3" height="1"/>
<rect x="626" y="184" width="1" height="1"/>
<rect x="626" y="187" width="1" height="1"/>
<rect x="626" y="190" width="1" height="1"/>
<rect x="626" y="192" width="1" height="1"/>
<rect x="626" y="195" width="1" height="1"/>
<rect x="626" y="198" width="1" height="1"/>
<rect x="626" y="200" width="3" height="1"/>
<rect x="626" y="203" width="1" height="1"/>
<rect x="626" y="206" width="1" height="1"/>
<rect x="626" y="208" width="1" height="1"/>
<rect x="626" y="211" width="1" height="1"/>
<rect x="626" y="213" width="1" height="1"/>
<rect x="626" y="216" width="1" height="1"/>
<rect x="626" y="219" width="3" height="1"/>
<rect x="626" y="221" width="1" height="1"/>
<rect x="626" y="224" width="1" height="1"/>
<rect x="626" y="227" width="1" height="1"/>
<rect x="626" y="229" width="1" height="1"/>
<rect x="626" y="232" width="1" height="1"/>
<rect x="626" y="235" width="1" height="1"/>
<rect x="626" y="237" width="3" height="1"/>
<rect x="626" y="240" width="1" height="1"/>
<rect x="626" y="242" width="1" height="1"/>
<rect x="626" y="245" width="1" height="1"/>
<rect x="626" y="248" width="1" height="1"/>
<rect x="626" y="250" width="1" height="1"/>
<rect x="626" y="253" width="1" height="1"/>
<rect x="626" y="256" width="3" height="1"/>
<rect x="626" y="258" width="1" height="1"/>
<rect x="626" y="261" width="1" height="1"/>
<rect x="625" y="262" width="5" height="1"/>
<rect x="626" y="269" width="3" height="1"/>
<rect x="626" y="272" width="1" height="1"/>
<rect x="626" y="274" width="1" height="1"/>
<rect x="626" y="277" width="1" height="1"/>
<rect x="626" y="280" width="1" height="1"/>
<rect x="626" y="282" width="1" height="1"/>
<rect x="626" y="285" width="1" height="1"/>
<rect x="626" y="288" width="3" height="1"/>
<rect x="626" y="290" width="1" height="1"/>
<rect x="626" y="293" width="1" height="1"/>
<rect x="626" y="295" width="1" height="1"/>
<rect x="626" y="298" width="1" height="1"/>
<rect x="626" y="301" width="1" height="1"/>
<rect x="626" y="303" width="1" height="1"/>
<rect x="626" y="306" width="3" height="1"/>
<rect x="626" y="309" width="1" height="1"/>
<rect x="626" y="311" width="1" height="1"/>
<rect x="626" y="314" width="1" height="1"/>
<rect x="626" y="317" width="1" height="1"/>
<rect x="626" y="319" width="1" height="1"/>
<rect x="626" y="322" width="1" height="1"/>
<rect x="626" y="325" width="3" height="1"/>
<rect x="626" y="327" width="1" height="1"/>
<rect x="626" y="330" width="1" height="1"/>
<rect x="626" y="332" width="1" height="1"/>
<rect x="626" y="335" width="1" height="1"/>
<rect x="626" y="338" width="1" height="1"/>
<rect x="626" y="340" width="1" height="1"/>
<rect x="626" y="343" width="3" height="1"/>
<rect x="626" y="346" width="1" height="1"/>
<rect x="626" y="348" width="1" height="1"/>
<rect x="626" y="351" width="1" height="1"/>
<rect x="626" y="354" width="1" height="1"/>
<rect x="626" y="356" width="1" height="1"/>
<rect x="626" y="359" width="1" height="1"/>
<rect x="626" y="361" width="3" height="1"/>
<rect x="626" y="364" width="1" height="1"/>
<rect x="626" y="367" width="1" height="1"/>
<rect x="626" y="369" width="1" height="1"/>
<rect x="626" y="372" width="1" height="1"/>
<rect x="626" y="375" width="1" height="1"/>
<rect x="626" y="377" width="1" height="1"/>
<rect x="626" y="380" width="3" height="1"/>
<rect x="626" y="383" width="1" height="1"/>
<rect x="626" y="385" width="1" height="1"/>
<rect x="626" y="388" width="1" height="1"/>
<rect x="626" y="391" width="1" height="1"/>
<rect x="626" y="393" width="1" height="1"/>
<rect x="626" y="396" width="1" height="1"/>
<rect x="626" y="398" width="3" height="1"/>
<rect x="626" y="401" width="1" height="1"/>
<rect x="626" y="404" width="1" height="1"/>
<rect x="626" y="406" width="1" height="1"/>
<rect x="626" y="409" width="1" height="1"/>
<rect x="626" y="412" width="1" height="1"/>
<rect x="626" y="414" width="1" height="1"/>
<rect x="626" y="417" width="3" height="1"/>
<rect x="626" y="420" width="1" height="1"/>
<rect x="626" y="422" width="1" height="1"/>
</g>
<rect x="173" y="423" width="457" height="2" fill="#6c6c6c"/>
<g fill="#e8e8e8">
<rect x="171" y="425" width="1" height="6"/>
<rect x="177" y="425" width="1" height="1"/>
<rect x="182" y="425" width="1" height="1"/>
<rect x="188" y="425" width="1" height="1"/>
<rect x="194" y="425" width="1" height="1"/>
<rect x="199" y="425" width="1" height="1"/>
<rect x="205" y="425" width="1" height="1"/>
<rect x="211" y="425" width="1" height="1"/>
<rect x="216" y="425" width="1" height="1"/>
<rect x="222" y="425" width="1" height="1"/>
<rect x="227" y="425" width="1" height="6"/>
<rect x="233" y="425" width="1" height="1"/>
<rect x="239" y="425" width="1" height="1"/>
<rect x="244" y="425" width="1" height="1"/>
<rect x="250" y="425" width="1" height="1"/>
<rect x="256" y="425" width="1" height="1"/>
<rect x="261" y="425" width="1" height="1"/>
<rect x="267" y="425" width="1" height="1"/>
<rect x="273" y="425" width="1" height="1"/>
<rect x="278" y="425" width="1" height="1"/>
<rect x="284" y="425" width="1" height="6"/>
<rect x="290" y="425" width="1" height="1"/>
<rect x="295" y="425" width="1" height="1"/>
<rect x="301" y="425" width="1" height="1"/>
<rect x="307" y="425" width="1" height="1"/>
<rect x="312" y="425" width="1" height="1"/>
<rect x="318" y="425" width="1" height="1"/>
<rect x="324" y="425" width="1" height="1"/>
<rect x="329" y="425" width="1" height="1"/>
<rect x="335" y="425" width="1" height="1"/>
<rect x="341" y="425" width="1" height="6"/>
<rect x="346" y="425" width="1" height="1"/>
<rect x="352" y="425" width="1" height="1"/>
<rect x="358" y="425" width="1" height="1"/>
<rect x="363" y="425" width="1" height="1"/>
<rect x="369" y="425" width="1" height="1"/>
<rect x="375" y="425" width="1" height="1"/>
<rect x="380" y="425" width="1" height="1"/>
<rect x="386" y="425" width="1" height="1"/>
<rect x="392" y="425" width="1" height="1"/>
<rect x="397" y="425" width="1" height="6"/>
<rect x="403" y="425" width="1" height="1"/>
<rect x="409" y="425" width="1" height="1"/>
<rect x="414" y="425" width="1" height="1"/>
<rect x="420" y="425" width="1" height="1"/>
<rect x="426" y="425" width="1" height="1"/>
<rect x="431" y="425" width="1" height="1"/>
<rect x="437" y="425" width="1" height="1"/>
<rect x="443" y="425" width="1" height="1"/>
<rect x="448" y="425" width="1" height="1"/>
<rect x="454" y="425" width="1" height="6"/>
<rect x="460" y="425" width="1" height="1"/>
<rect x="465" y="425" width="1" height="1"/>
<rect x="471" y="425" width="1" height="1"/>
<rect x="477" y="425" width="1" height="1"/>
<rect x="482" y="425" width="1" height="1"/>
<rect x="488" y="425" width="1" height="1"/>
<rect x="494" y="425" width="1" height="1"/>
<rect x="499" y="425" width="1" height="1"/>
<rect x="505" y="425" width="1" height="1"/>
<rect x="511" y="425" width="1" height="6"/>
<rect x="516" y="425" width="1" height="1"/>
<rect x="522" y="425" width="1" height="1"/>
<rect x="528" y="425" width="1" height="1"/>
<rect x="533" y="425" width="1" height="1"/>
<rect x="539" y="425" width="1" height="1"/>
<rect x="545" y="425" width="1" height="1"/>
<rect x="550" y="425" width="1" height="1"/>
<rect x="556" y="425" width="1" height="1"/>
<rect x="562" y="425" width="1" height="1"/>
<rect x="567" y="425" width="1" height="6"/>
<rect x="573" y="425" width="1" height="1"/>
<rect x="579" y="425" width="1" height="1"/>
<rect x="584" y="425" width="1" height="1"/>
<rect x="590" y="425" width="1" height="1"/>
<rect x="596" y="425" width="1" height="1"/>
<rect x="601" y="425" width="1" height="1"/>
<rect x="607" y="425" width="1" height="1"/>
<rect x="613" y="425" width="1" height="1"/>
<rect x="618" y="425" width="1" height="1"/>
<rect x="624" y="425" width="1" height="6"/>
<rect x="630" y="425" width="1" height="1"/>
</g>
<g font-size="7.8" fill="#f2f2f2" stroke="#f2f2f2" stroke-width="0.15" font-family="Liberation Sans">
<text x="630.5" y="111.3">smpl</text>
<text x="630.5" y="129.8">+22500</text>
<text x="630.5" y="148.3">+15000</text>
<text x="630.5" y="166.8">+7500</text>
<text x="630.5" y="185.2">+0</text>
<text x="630.5" y="203.7">-7500</text>
<text x="630.5" y="222.2">-15000</text>
<text x="630.5" y="240.7">-22500</text>
<text x="630.5" y="272.6">smpl</text>
<text x="630.5" y="291.1">+22500</text>
<text x="630.5" y="309.5">+15000</text>
<text x="630.5" y="328.0">+7500</text>
<text x="630.5" y="346.5">+0</text>
<text x="630.5" y="365.0">-7500</text>
<text x="630.5" y="383.5">-15000</text>
<text x="630.5" y="401.9">-22500</text>
<text x="173.3" y="436.2">0.000</text>
<text x="230.0" y="436.2">4.000</text>
<text x="286.6" y="436.2">8.000</text>
<text x="343.3" y="436.2">12.000</text>
<text x="399.9" y="436.2">16.000</text>
<text x="456.6" y="436.2">20.000</text>
<text x="513.2" y="436.2">24.000</text>
<text x="569.9" y="436.2">28.000</text>
</g>
</svg>

<!-- cursor marker -->
<svg class="a" style="left:166px;top:417px" width="10" height="13"><path d="M5 1C6.8 3.5 9 5.5 9 8A4 4 0 0 1 1 8C1 5.5 3.2 3.5 5 1Z" fill="#fff" stroke="#000" stroke-width="0.9"/><circle cx="5" cy="8" r="1.2" fill="#111"/></svg>

<!-- window border -->
<div class="a" style="left:668px;top:70px;width:1px;height:370px;background:#3a3a3a"></div>
<div class="a" style="left:669px;top:0;width:1px;height:440px;background:#a6a6a6"></div>
<div class="a" style="left:0;top:438px;width:670px;height:1px;background:#3a3a3a"></div>
<div class="a" style="left:0;top:439px;width:670px;height:1px;background:#a6a6a6"></div>
</body></html>
